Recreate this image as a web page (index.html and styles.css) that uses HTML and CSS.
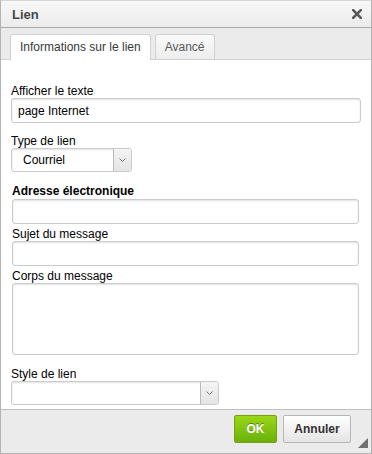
FILE: index.html
```html
<!DOCTYPE html>
<html lang="fr">
<head>
    <meta charset="UTF-8">
    <title>Lien</title>
    <link rel="stylesheet" href="styles.css">
</head>
<body>
    <div class="dialog">
        <div class="title-bar">
            <span class="title">Lien</span>
            <svg class="close" width="10" height="10" viewBox="0 0 10 10">
                <path d="M1.2 1.2 L8.8 8.8 M8.8 1.2 L1.2 8.8" stroke="#575757" stroke-width="2.6" stroke-linecap="square"/>
            </svg>
        </div>
        <div class="tabs">
            <div class="tab active">Informations sur le lien</div>
            <div class="tab">Avancé</div>
        </div>
        <div class="contents">
            <label class="field-label first">Afficher le texte</label>
            <input class="text-input" type="text" value="page Internet">

            <label class="field-label gap">Type de lien</label>
            <div class="select select-type">
                <span class="select-value">Courriel</span>
                <span class="select-arrow">
                    <svg width="7" height="4" viewBox="0 0 7 4"><path d="M0.5 0.5 L3.5 3.5 L6.5 0.5" fill="none" stroke="#777" stroke-width="1"/></svg>
                </span>
            </div>

            <div class="email-group">
                <label class="field-label gap bold">Adresse électronique</label>
                <input class="text-input" type="text">
                <label class="field-label small-gap">Sujet du message</label>
                <input class="text-input" type="text">
                <label class="field-label small-gap">Corps du message</label>
                <textarea class="text-area"></textarea>
            </div>

            <label class="field-label gap-large">Style de lien</label>
            <div class="select select-style">
                <span class="select-value"></span>
                <span class="select-arrow">
                    <svg width="7" height="4" viewBox="0 0 7 4"><path d="M0.5 0.5 L3.5 3.5 L6.5 0.5" fill="none" stroke="#777" stroke-width="1"/></svg>
                </span>
            </div>
        </div>
        <div class="footer">
            <button class="btn btn-ok">OK</button>
            <button class="btn btn-cancel">Annuler</button>
            <span class="resizer"></span>
        </div>
    </div>
</body>
</html>
```

FILE: styles.css
```css
body { margin: 0; font-family: "Liberation Sans", Arial, sans-serif; font-size: 12px; color: #000; background: #fff; }
.dialog { width: 372px; height: 454px; box-sizing: border-box; border: 1px solid #b3b3b3; border-top-color: #d6d6d6; display: flex; flex-direction: column; background: #fff; }

.title-bar { height: 26px; flex: none; display: flex; align-items: center; justify-content: space-between; padding: 0 9px 0 11px; background: linear-gradient(#f8f8f8, #ebebeb); border-bottom: 1px solid #a9a9a9; }
.title { font-size: 13px; font-weight: bold; color: #474747; }
.close { display: block; }

.tabs { flex: none; display: flex; align-items: flex-end; gap: 4px; height: 25px; padding: 6px 0 0 9px; background: #ebebeb; border-bottom: 1px solid #d1d1d1; }
.tab { box-sizing: border-box; height: 25px; line-height: 24px; padding: 0 9px; border: 1px solid #d1d1d1; border-bottom: 0; border-radius: 3px 3px 0 0; background: linear-gradient(#fafafa, #ededed); color: #595959; }
.tab.active { height: 26px; margin-bottom: -1px; background: #fff; color: #383838; }

.contents { flex: 1; padding: 0 10px; }
.field-label { display: block; line-height: 14px; color: #000; }
.field-label.first { margin-top: 24px; }
.field-label.gap { margin-top: 11px; }
.field-label.gap-large { margin-top: 12px; }
.field-label.small-gap { margin-top: 3px; }
.field-label.bold { font-weight: bold; margin-top: 12px; margin-bottom: 1px; }

.text-input, .text-area { display: block; box-sizing: border-box; width: 100%; height: 25px; margin: 0; padding: 0 6px; border: 1px solid #c9cccf; border-radius: 3px; box-shadow: inset 0 1px 2px rgba(0,0,0,0.12); font: inherit; color: #000; background: #fff; }
.text-area { height: 72px; resize: none; }
.email-group { padding: 0 2px 0 1px; }

.select { box-sizing: border-box; display: flex; height: 24px; border: 1px solid #c9cccf; border-radius: 3px; box-shadow: inset 0 1px 2px rgba(0,0,0,0.12); overflow: hidden; background: #fff; }
.select-type { width: 121px; }
.select-style { width: 208px; }
.select-value { flex: 1; line-height: 22px; padding-left: 11px; }
.select-arrow { width: 17px; display: flex; align-items: center; justify-content: center; border-left: 1px solid #b9b9b9; background: linear-gradient(#f4f4f4, #e4e4e4); }
.select-arrow svg { display: block; }

.footer { flex: none; height: 38px; display: flex; align-items: flex-start; justify-content: flex-end; gap: 6px; padding: 5px 3px 0 0; background: #ebebeb; border-top: 1px solid #bfbfbf; }
.btn { box-sizing: border-box; height: 28px; margin: 0; border-radius: 2px; font: bold 12px "Liberation Sans", Arial, sans-serif; cursor: pointer; }
.btn-ok { width: 43px; color: #fff; border: 1px solid #7a9f0f; background: linear-gradient(#9ad717, #69b10b); text-shadow: 0 -1px 0 #55830c; }
.btn-cancel { width: 68px; color: #333; border: 1px solid #b6b6b6; background: linear-gradient(#fff, #e4e4e4); }
.resizer { align-self: flex-end; margin: 0 0 5px 1px; width: 0; height: 0; border-style: solid; border-width: 0 0 10px 10px; border-color: transparent transparent #6f6f6f transparent; }
```
